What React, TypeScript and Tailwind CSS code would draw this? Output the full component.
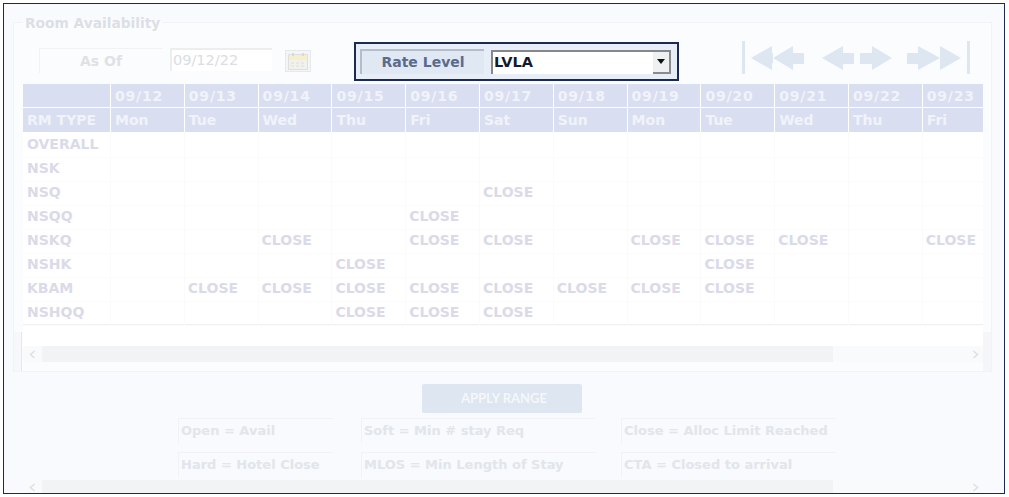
const dates = ['09/12', '09/13', '09/14', '09/15', '09/16', '09/17', '09/18', '09/19', '09/20', '09/21', '09/22', '09/23'];
const days = ['Mon', 'Tue', 'Wed', 'Thu', 'Fri', 'Sat', 'Sun', 'Mon', 'Tue', 'Wed', 'Thu', 'Fri'];

const rows: { name: string; closed: number[] }[] = [
  { name: 'OVERALL', closed: [] },
  { name: 'NSK', closed: [] },
  { name: 'NSQ', closed: [5] },
  { name: 'NSQQ', closed: [4] },
  { name: 'NSKQ', closed: [2, 4, 5, 7, 8, 9, 11] },
  { name: 'NSHK', closed: [3, 8] },
  { name: 'KBAM', closed: [1, 2, 3, 4, 5, 6, 7, 8] },
  { name: 'NSHQQ', closed: [3, 4, 5] },
];

const gridCols = 'grid grid-cols-[87px_repeat(11,73.8px)_61px]';

function NavArrows() {
  return (
    <svg width="232" height="34" viewBox="0 0 232 34" className="text-[#dde6f1]" fill="currentColor">
      <rect x="2" y="0" width="3" height="33" />
      <polygon points="11,17 32,5 32,12 33,12 33,22 32,22 32,29" />
      <polygon points="33,17 53,5 53,12 64,12 64,23 53,23 53,29" />
      <polygon points="82,17 103,5 103,12 114,12 114,23 103,23 103,29" />
      <polygon points="152,17 132,5 132,12 120,12 120,23 132,23 132,29" />
      <polygon points="200,17 178,5 178,12 167,12 167,23 178,23 178,29" />
      <polygon points="221,17 200,5 200,29" />
      <rect x="227" y="0" width="3" height="33" />
    </svg>
  );
}

function CalendarIcon() {
  return (
    <div className="ml-[13px] mt-[2px] flex h-[22px] w-[26px] items-center justify-center border border-[#e6e8ec] bg-[#f4f5f6]">
      <svg width="20" height="17" viewBox="0 0 20 17">
        <rect x="0.5" y="1.5" width="19" height="15" fill="#f1f1ee" stroke="#dedfdf" />
        <rect x="1" y="2" width="18" height="5" fill="#f6efc9" />
        <rect x="4" y="0" width="2" height="3" fill="#d8d9da" />
        <rect x="14" y="0" width="2" height="3" fill="#d8d9da" />
        <path d="M3 10h3M8 10h3M13 10h3M3 13h3M8 13h3M13 13h3" stroke="#dcdde0" strokeWidth="1" />
      </svg>
    </div>
  );
}

function ScrollBar({ height }: { height: string }) {
  return (
    <div className={`relative flex items-center justify-between bg-[#f9fafc] pl-[6px] pr-[4px] text-[#dcdfe3] ${height}`}>
      <svg width="7" height="9" viewBox="0 0 7 9" fill="none" stroke="currentColor" strokeWidth="1.5">
        <path d="M5.5 1L1.5 4.5L5.5 8" />
      </svg>
      <div className="absolute bottom-0 left-[19px] top-0 w-[791px] bg-[#f2f3f4]" />
      <svg width="7" height="9" viewBox="0 0 7 9" fill="none" stroke="currentColor" strokeWidth="1.5">
        <path d="M1.5 1L5.5 4.5L1.5 8" />
      </svg>
    </div>
  );
}

function LegendBox({ text, width }: { text: string; width: string }) {
  return (
    <div className={`flex h-[25px] items-center border-l border-t border-[#f0f2f6] border-r-[#f6f7fa] pl-[2px] text-[13px] font-bold text-[#e2e5eb] ${width}`}>
      {text}
    </div>
  );
}

export default function App() {
  return (
    <div className="h-[497px] w-[1009px] overflow-hidden bg-white pl-[3px] pt-[3px] font-['DejaVu_Sans',sans-serif]">
      <div className="h-[491px] w-[1002px] overflow-hidden border border-[#1b2a4e] bg-[#f8fafd]">
        <fieldset className="relative ml-[9px] mt-[9px] h-[359px] w-[979px] border border-[#f0f3f7] bg-[#fbfcfe] pl-[9px]">
          <legend className="px-[2px] pt-[2px] text-[13.75px] font-bold leading-[16px] text-[#dcdfe6]">Room Availability</legend>

          <div className="absolute bottom-0 left-0 h-[39px] w-[8px] border-r border-[#e6e7ea] bg-[#f6f8fb]" />
          <div className="absolute bottom-0 right-0 h-[39px] w-[8px] bg-[#f4f6fa]" />

          <div className="flex h-[52px] pt-[17px]">
            <div className="ml-[16px] flex h-[25px] w-[123px] items-center justify-center border-l border-t border-[#f0f2f4] text-[14px] font-bold text-[#dfe1e5]">
              As Of
            </div>
            <div className="ml-[8px] flex h-[23px] w-[102px] items-center border-l-2 border-t-2 border-[#eceded] bg-white pl-[1px] text-[14.5px] text-[#dadde2]">
              09/12/22
            </div>
            <CalendarIcon />
            <div className="-mt-[6px] ml-[43px] flex h-[39px] w-[325px] items-center border-2 border-[#1b2a4e] bg-[#e8eef7] pl-[4px]">
              <div className="flex h-[25px] w-[124px] items-center justify-center border-l-2 border-t-2 border-[#b4bdca] bg-[#e0e8f4] text-[14px] font-bold text-[#5b6b8c]">
                Rate Level
              </div>
              <div className="ml-[7px] flex h-[24px] w-[180px] items-center justify-between border-l-2 border-t-2 border-[#87888a] border-r-[#f2f2f2] bg-white pl-[1px] text-[14.5px] font-bold text-[#111b30]">
                LVLA
                <div className="flex h-[22px] w-[18px] items-center justify-center border-b-2 border-r-2 border-[#8a8b8d] bg-[#eef0f1]">
                  <svg width="8" height="5" viewBox="0 0 8 5">
                    <polygon points="0,0 8,0 4,5" fill="#111" />
                  </svg>
                </div>
              </div>
            </div>
            <div className="-mt-[7px] ml-[61px]">
              <NavArrows />
            </div>
          </div>

          <div className="w-[960px] bg-white">
            <div className={`${gridCols} mt-[1px] bg-[#d9dff0] text-[14px] font-bold leading-[24px] text-[#f1f3fa]`}>
              <div className="h-[24px] border-b border-white" />
              {dates.map((d) => (
                <div key={d} className="h-[24px] border-b border-l border-white pl-[4px] tracking-[0.8px]">{d}</div>
              ))}
              <div className="h-[24px] pl-[4px]">RM TYPE</div>
              {days.map((d, i) => (
                <div key={i} className="h-[24px] border-l border-white pl-[4px]">{d}</div>
              ))}
            </div>
            {rows.map((r) => (
              <div key={r.name} className={`${gridCols} h-[24px] text-[14px] font-bold leading-[25px] text-[#dadae9]`}>
                <div className="border-b border-[#fbfbfc] pl-[4px]">{r.name}</div>
                {dates.map((_, i) => (
                  <div key={i} className="border-b border-l border-[#fbfbfc] pl-[3px]">
                    {r.closed.includes(i) ? 'CLOSE' : ''}
                  </div>
                ))}
              </div>
            ))}
            <div className="h-[22px] border-t-2 border-[#f0f1f3]" />
            <ScrollBar height="h-[16px]" />
          </div>
        </fieldset>

        <div className="ml-[418px] mt-[12px] flex h-[29px] w-[160px] items-center justify-center rounded-[2px] bg-[#dde6f1] pl-[4px] font-['Lato',sans-serif] text-[13px] font-bold text-[#f5f7fa]">
          APPLY RANGE
        </div>

        <div className="ml-[174px] mt-[5px] grid w-[660px] grid-cols-[183px_260px_215px] gap-y-[9px]">
          <LegendBox text="Open = Avail" width="w-[155px]" />
          <LegendBox text="Soft = Min # stay Req" width="w-[234px]" />
          <LegendBox text="Close = Alloc Limit Reached" width="w-[215px]" />
          <LegendBox text="Hard = Hotel Close" width="w-[155px]" />
          <LegendBox text="MLOS = Min Length of Stay" width="w-[234px]" />
          <LegendBox text="CTA = Closed to arrival" width="w-[215px]" />
        </div>

        <div className="ml-[19px] mt-[3px] w-[960px]">
          <ScrollBar height="h-[14px]" />
        </div>
      </div>
    </div>
  );
}
